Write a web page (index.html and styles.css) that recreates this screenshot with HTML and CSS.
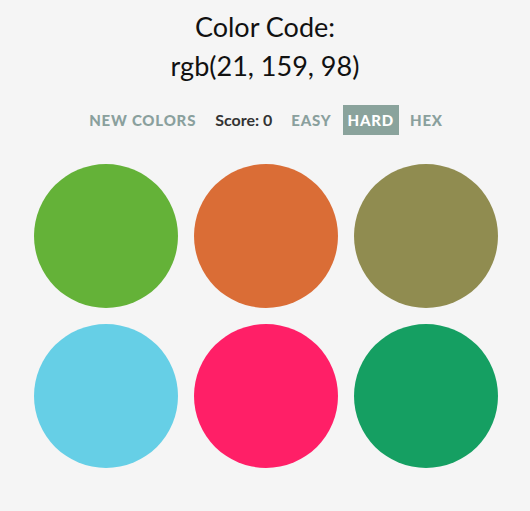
FILE: index.html
```html
<!DOCTYPE html>
<html>
<head>
<meta charset="utf-8">
<link rel="stylesheet" href="styles.css">
</head>
<body>
<header class="title">
  <div class="title-line">Color Code:</div>
  <div class="title-line">rgb(21, 159, 98)</div>
</header>
<nav class="controls">
  <span class="btn">New Colors</span>
  <span class="score">Score: 0</span>
  <span class="btn">Easy</span>
  <span class="btn selected">Hard</span>
  <span class="btn">Hex</span>
</nav>
<main class="grid">
  <div class="circle" style="background:#64b238"></div>
  <div class="circle" style="background:#da6d36"></div>
  <div class="circle" style="background:#908c50"></div>
  <div class="circle" style="background:#66cfe6"></div>
  <div class="circle" style="background:#ff1f67"></div>
  <div class="circle" style="background:#159f62"></div>
</main>
</body>
</html>
```
FILE: styles.css
```css
html, body {
  margin: 0;
  padding: 0;
  background: #f5f5f5;
}
body {
  font-family: Lato, "Noto Sans", sans-serif;
  color: #111;
}
.title {
  text-align: center;
  padding-top: 7px;
  font-size: 27px;
  line-height: 39px;
}
.controls {
  display: flex;
  justify-content: center;
  align-items: center;
  gap: 6px;
  margin-top: 20px;
  font-size: 15px;
  font-weight: 900;
  padding-left: 2px;
}
.btn {
  text-transform: uppercase;
  letter-spacing: 0.8px;
  color: #8aa09d;
  padding: 0 5px;
  line-height: 30px;
}
.btn.selected {
  background: #8aa39c;
  color: #fff;
}
.score {
  color: #333;
  font-size: 16px;
  font-weight: 700;
  padding: 0 8px;
  line-height: 30px;
}
.grid {
  display: grid;
  grid-template-columns: repeat(3, 144px);
  gap: 16px;
  justify-content: center;
  margin-top: 29px;
  padding-left: 2px;
}
.circle {
  width: 144px;
  height: 144px;
  border-radius: 50%;
}
```
